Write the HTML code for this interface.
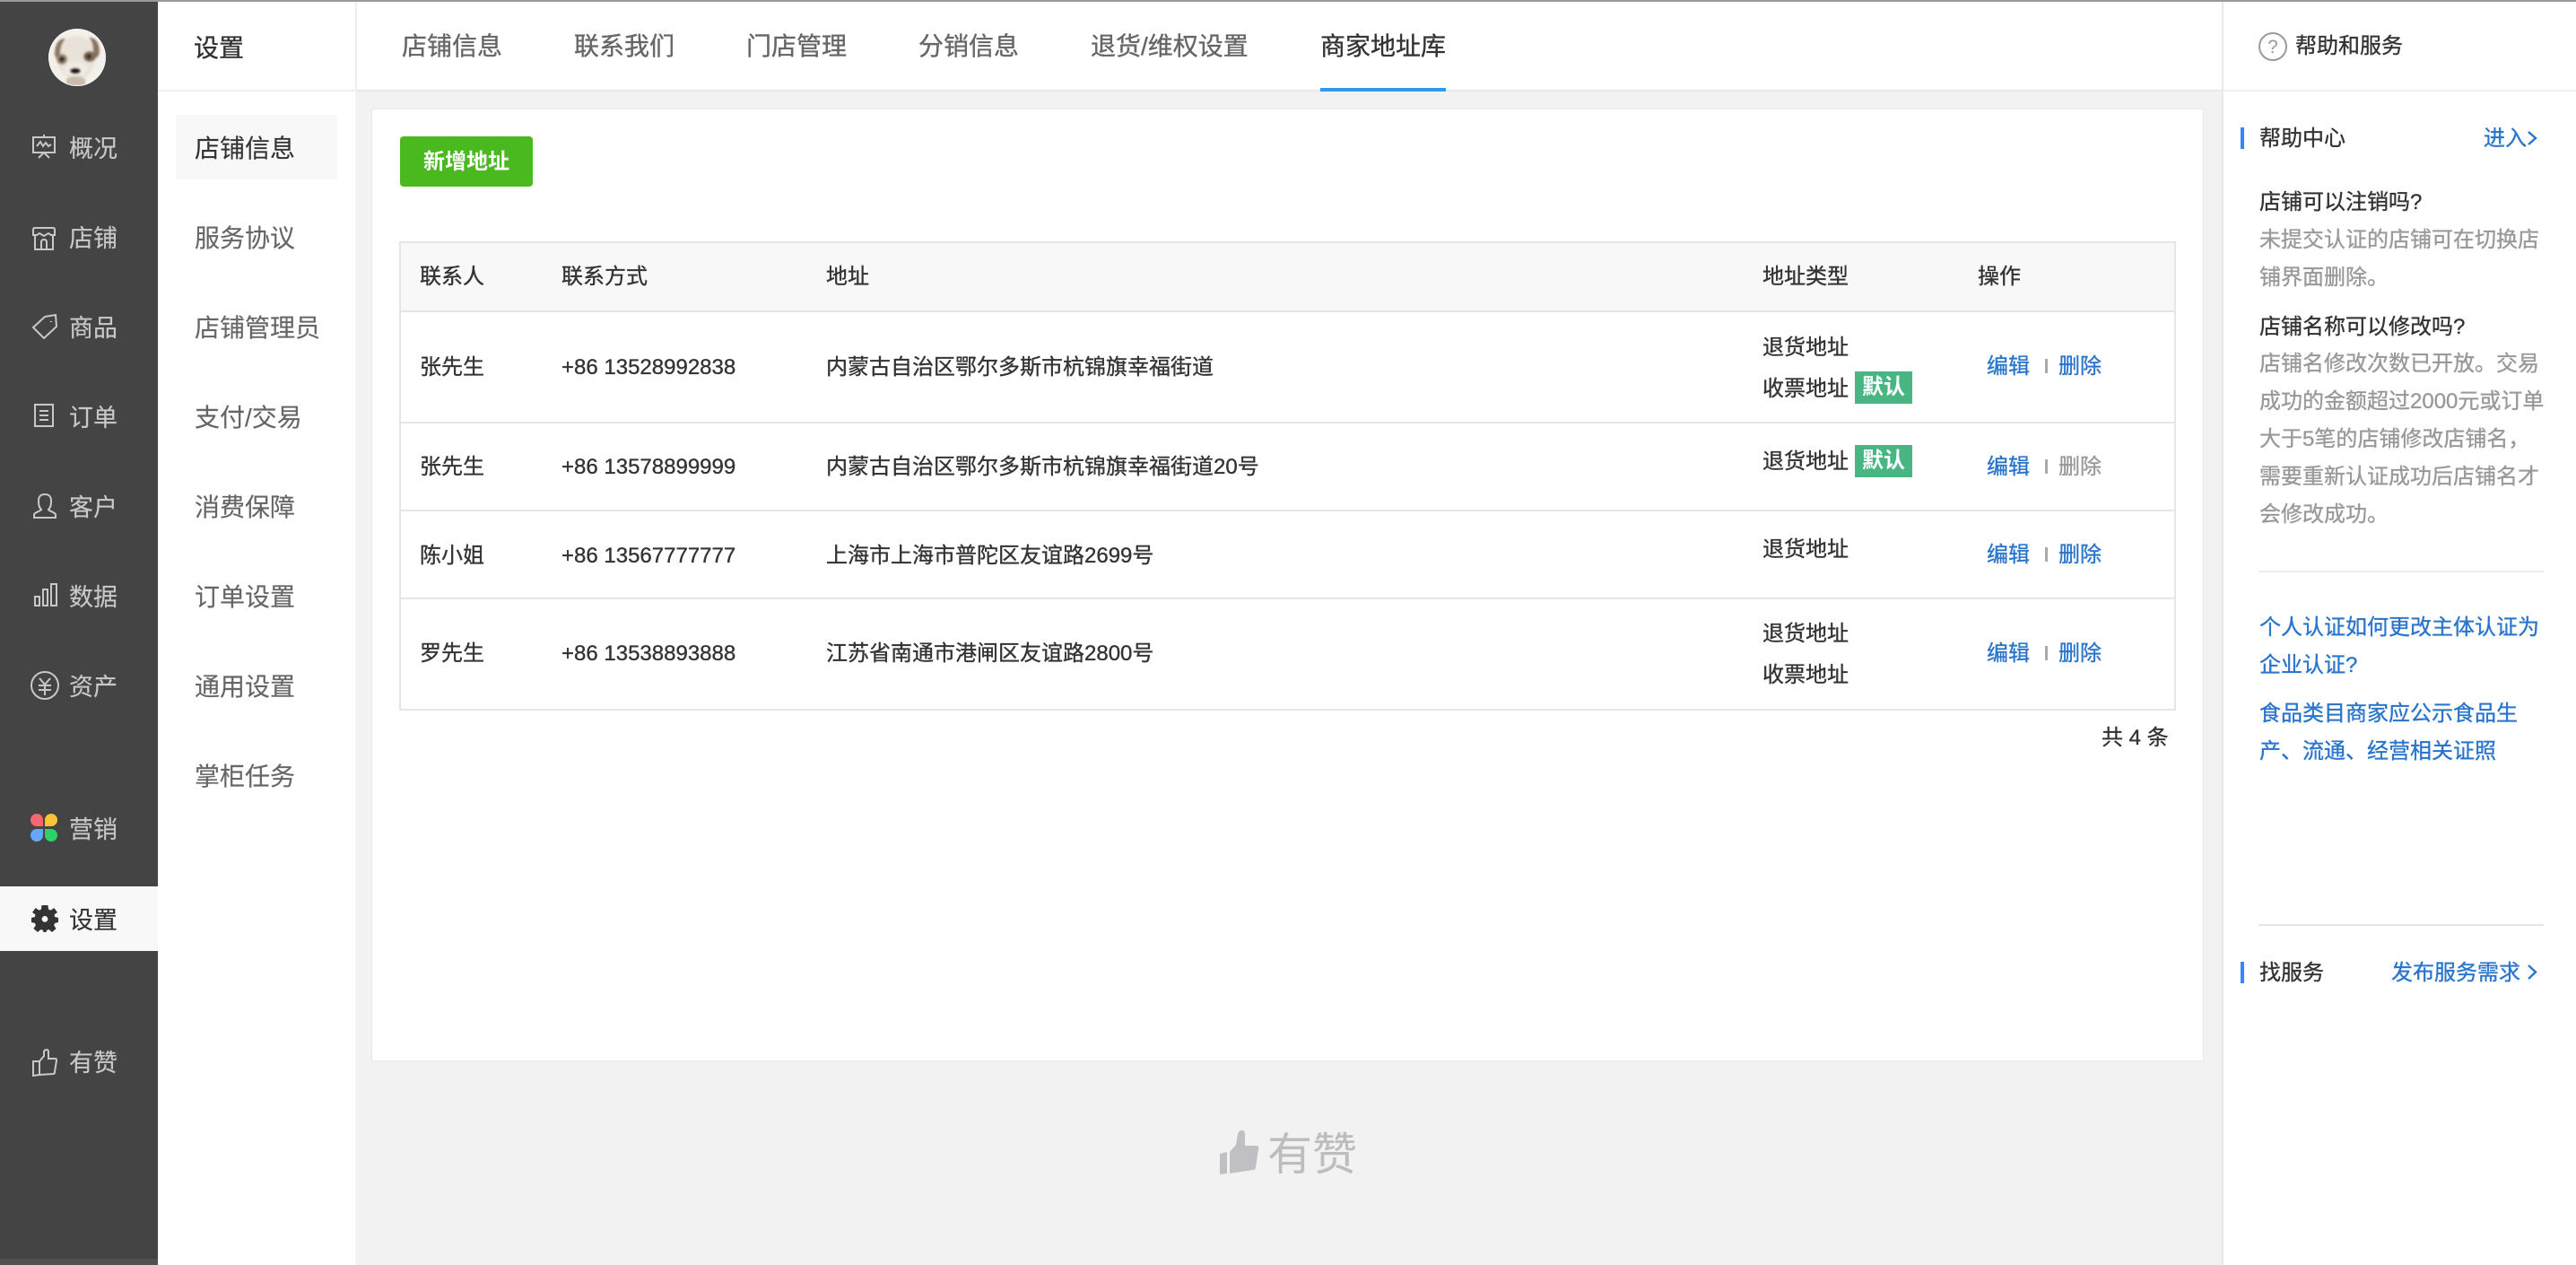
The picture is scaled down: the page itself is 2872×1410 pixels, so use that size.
<!DOCTYPE html>
<html lang="zh-CN"><head><meta charset="utf-8"><title>商家地址库</title>
<style>
html,body{margin:0;padding:0;width:2872px;height:1410px;overflow:hidden;background:#f2f2f2}
body{position:relative;font-family:"Liberation Sans","Noto Sans CJK SC",sans-serif;font-size:24px;color:#333}
div,span,svg{position:absolute}
.t{white-space:nowrap;line-height:40px;height:40px;transform:translateY(2px);-webkit-text-stroke:.35px currentColor}
.s{font-size:27px;color:#c8c8c8;left:77px;-webkit-text-stroke:.15px currentColor}
.n{font-size:28px;color:#666;left:217px;-webkit-text-stroke:.15px currentColor}
.tb{font-size:28px;color:#666;top:30px}
.l{color:#2a75cc}
.g{color:#999}
.bd{background:#e5e5e5}
.sep{left:2280px;width:3px;height:16px;background:#aaa}
.tag{background:#48b583;color:#fff;width:64px;height:36px;line-height:36px;text-align:center;left:2068px;font-size:24px;font-weight:700}
svg.i{fill:none;stroke:#c8c8c8;stroke-width:2}
</style></head><body>
<div style="left:0;top:0;width:2872px;height:2px;background:#999;z-index:5"></div>

<!-- primary sidebar -->
<div style="left:0;top:2px;width:176px;height:1401px;background:#444"></div>
<div style="left:0;top:1403px;width:176px;height:7px;background:#505050"></div>
<div style="left:0;top:988px;width:176px;height:72px;background:#f8f8f8"></div>

<svg style="left:54px;top:32px" width="64" height="64" viewBox="0 0 64 64">
<defs><clipPath id="c"><circle cx="32" cy="32" r="31"/></clipPath><filter id="bl"><feGaussianBlur stdDeviation="1"/></filter></defs>
<circle cx="32" cy="32" r="32" fill="#fbfaf8"/>
<g clip-path="url(#c)"><g filter="url(#bl)">
<rect width="64" height="64" fill="#f3efe9"/>
<ellipse cx="31" cy="32" rx="22" ry="24" fill="#e9e2d9"/>
<path d="M7 30C6 19 11 10 19 11 14 17 13 24 13 30L10 36Z" fill="#8f7a62"/>
<path d="M57 28C58 17 53 9 45 10 50 15 50 22 50 27L54 33Z" fill="#8a7660"/>
<ellipse cx="15" cy="34" rx="6" ry="6" fill="#98856f"/>
<ellipse cx="46" cy="31" rx="7" ry="6" fill="#7f6e5a"/>
<circle cx="15" cy="34" r="3" fill="#332921"/>
<circle cx="45" cy="31" r="3" fill="#40342a"/>
<ellipse cx="30" cy="45" rx="13" ry="8" fill="#f0ebe4"/>
<ellipse cx="30" cy="47" rx="6" ry="3.4" fill="#241d19"/>
<path d="M20 56Q30 50 41 56L41 64 20 64Z" fill="#c9bcac"/>
<path d="M0 46Q6 58 16 64L0 64Z" fill="#b4aa9d"/>
<path d="M64 46Q58 58 46 64L64 64Z" fill="#bfb5a8"/>
</g></g></svg>

<!-- 概况 -->
<svg class="i" style="left:36px;top:150px" width="26" height="27" viewBox="0 0 26 27"><path d="M1 3H25V20H1ZM13 0V3M5 13L9 8 12 13 15 9 18 13 21 11M7 26L13 20 19 26"/></svg>
<!-- 店铺 -->
<svg class="i" style="left:36px;top:253px" width="26" height="26" viewBox="0 0 26 26"><path d="M3 1H23Q25 1 25 3V9L21 9 18 7 13 10 8 7 5 9 1 9V3Q1 1 3 1ZM3 9V25H23V9M10 25V17Q10 14 13 14T16 17V25"/></svg>
<!-- 商品 -->
<svg class="i" style="left:36px;top:350px" width="28" height="28" viewBox="0 0 28 28"><path d="M14 3L26 1 27 14 13 27 1 15ZM21 8L21 9"/></svg>
<!-- 订单 -->
<svg class="i" style="left:38px;top:450px" width="22" height="26" viewBox="0 0 22 26"><path d="M1 1H21V25H1ZM6 8H16M6 13H16M6 18H16"/></svg>
<!-- 客户 -->
<svg class="i" style="left:37px;top:550px" width="26" height="28" viewBox="0 0 26 28"><path d="M1 27V24C1 21 8 20 9 18 6 15 6 11 6 8 6 3 9 1 13 1S20 3 20 8C20 11 20 15 17 18 18 20 25 21 25 24V27Z"/></svg>
<!-- 数据 -->
<svg class="i" style="left:38px;top:650px" width="26" height="26" viewBox="0 0 26 26"><path d="M1 15H6V25H1ZM10 7H15V25H10ZM19 1H25V25H19Z"/></svg>
<!-- 资产 -->
<svg class="i" style="left:34px;top:748px" width="32" height="32" viewBox="0 0 32 32"><circle cx="16" cy="16" r="15"/><path d="M10 8L16 15 22 8M9 16H23M9 21H23M16 15V27"/></svg>
<!-- 营销 -->
<svg style="left:34px;top:907px" width="30" height="31" viewBox="0 0 30 31">
<path d="M14 14H7A7 7 0 1 1 14 7Z" fill="#f5686f"/><path d="M16 14H23A7 7 0 1 0 16 7Z" fill="#fdc533"/>
<path d="M14 17H7A7 7 0 1 0 14 24Z" fill="#66a6fb"/><path d="M16 17H23A7 7 0 1 1 16 24Z" fill="#2cd168"/></svg>
<!-- 设置 gear -->
<svg style="left:35px;top:1009px" width="30" height="30" viewBox="0 0 30 30"><path fill="#333" fill-rule="evenodd" d="M11.5 0H18.5L19 4.5 21.5 5.6 25.3 3 29 8 25.6 10.5 26 13 30 14V19L26 20 25.2 22.5 27.6 26 23 30 19.5 27 17 28 16.5 30H13.5L13 28 10.5 27 7 30 2.4 26 4.8 22.5 4 20 0 19V14L4 13 4.4 10.5 1 8 4.7 3 8.5 5.6 11 4.5ZM15 12A3.4 3.4 0 1 0 15 18.8 3.4 3.4 0 0 0 15 12Z"/></svg>
<!-- 有赞 thumb -->
<svg class="i" style="left:36px;top:1169px" width="28" height="31" viewBox="0 0 28 31"><path d="M1 14H8V29L1 30ZM8 14L13 8V3Q14 1 16 1 18 1 18 4V11H26Q27 11 27 13L25 26Q25 28 23 28L8 29"/></svg>

<div class="t s" style="top:144px">概况</div>
<div class="t s" style="top:244px">店铺</div>
<div class="t s" style="top:344px">商品</div>
<div class="t s" style="top:444px">订单</div>
<div class="t s" style="top:544px">客户</div>
<div class="t s" style="top:644px">数据</div>
<div class="t s" style="top:744px">资产</div>
<div class="t s" style="top:903px">营销</div>
<div class="t s" style="top:1004px;color:#333">设置</div>
<div class="t s" style="top:1163px">有赞</div>

<!-- secondary nav -->
<div style="left:176px;top:2px;width:220px;height:1408px;background:#fff"></div>
<div style="left:176px;top:100px;width:220px;height:2px;background:#f0f0f0"></div>
<div style="left:396px;top:2px;width:2px;height:98px;background:#eee"></div>
<div style="left:196px;top:128px;width:180px;height:72px;background:#f8f8f8;border-radius:2px"></div>
<div class="t" style="left:216px;top:32px;font-size:28px;color:#333">设置</div>
<div class="t n" style="top:144px;color:#333">店铺信息</div>
<div class="t n" style="top:244px">服务协议</div>
<div class="t n" style="top:344px">店铺管理员</div>
<div class="t n" style="top:444px">支付/交易</div>
<div class="t n" style="top:544px">消费保障</div>
<div class="t n" style="top:644px">订单设置</div>
<div class="t n" style="top:744px">通用设置</div>
<div class="t n" style="top:844px">掌柜任务</div>

<!-- tabs -->
<div style="left:398px;top:2px;width:2079px;height:98px;background:#fff"></div>
<div style="left:398px;top:100px;width:2079px;height:2px;background:#e8e8e8"></div>
<div class="t tb" style="left:448px">店铺信息</div>
<div class="t tb" style="left:640px">联系我们</div>
<div class="t tb" style="left:832px">门店管理</div>
<div class="t tb" style="left:1024px">分销信息</div>
<div class="t tb" style="left:1216px">退货/维权设置</div>
<div class="t tb" style="left:1472px;color:#333">商家地址库</div>
<div style="left:1472px;top:98px;width:140px;height:4px;background:#2d9cf0"></div>

<!-- card -->
<div style="left:415px;top:122px;width:2041px;height:1060px;background:#fff;box-shadow:0 0 0 1px #e8e8e8"></div>
<div style="left:446px;top:152px;width:148px;height:56px;background:#4ab81f;border-radius:4px"></div>
<div class="t" style="left:446px;top:159px;width:148px;text-align:center;color:#fff;font-weight:700;-webkit-text-stroke:0">新增地址</div>

<!-- table -->
<div style="left:446px;top:269px;width:1979px;height:78px;background:#f8f8f8"></div>
<div class="bd" style="left:446px;top:269px;width:1979px;height:2px"></div>
<div class="bd" style="left:446px;top:346px;width:1979px;height:2px"></div>
<div class="bd" style="left:446px;top:470px;width:1979px;height:2px"></div>
<div class="bd" style="left:446px;top:568px;width:1979px;height:2px"></div>
<div class="bd" style="left:446px;top:666px;width:1979px;height:2px"></div>
<div class="bd" style="left:446px;top:790px;width:1979px;height:2px"></div>
<div class="bd" style="left:445px;top:269px;width:2px;height:523px"></div>
<div class="bd" style="left:2424px;top:269px;width:2px;height:523px"></div>

<div class="t" style="left:468px;top:287px">联系人</div>
<div class="t" style="left:626px;top:287px">联系方式</div>
<div class="t" style="left:921px;top:287px">地址</div>
<div class="t" style="left:1965px;top:287px">地址类型</div>
<div class="t" style="left:2205px;top:287px">操作</div>

<div class="t" style="left:468px;top:388px">张先生</div>
<div class="t" style="left:626px;top:388px">+86 13528992838</div>
<div class="t" style="left:921px;top:388px">内蒙古自治区鄂尔多斯市杭锦旗幸福街道</div>
<div class="t" style="left:1965px;top:366px">退货地址</div>
<div class="t" style="left:1965px;top:412px">收票地址</div>
<div class="tag" style="top:414px">默认</div>
<div class="t l" style="left:2215px;top:387px">编辑</div>
<div class="sep" style="top:400px"></div>
<div class="t l" style="left:2295px;top:387px">删除</div>

<div class="t" style="left:468px;top:499px">张先生</div>
<div class="t" style="left:626px;top:499px">+86 13578899999</div>
<div class="t" style="left:921px;top:499px">内蒙古自治区鄂尔多斯市杭锦旗幸福街道20号</div>
<div class="t" style="left:1965px;top:493px">退货地址</div>
<div class="tag" style="top:496px">默认</div>
<div class="t l" style="left:2215px;top:499px">编辑</div>
<div class="sep" style="top:512px"></div>
<div class="t g" style="left:2295px;top:499px">删除</div>

<div class="t" style="left:468px;top:598px">陈小姐</div>
<div class="t" style="left:626px;top:598px">+86 13567777777</div>
<div class="t" style="left:921px;top:598px">上海市上海市普陀区友谊路2699号</div>
<div class="t" style="left:1965px;top:591px">退货地址</div>
<div class="t l" style="left:2215px;top:597px">编辑</div>
<div class="sep" style="top:610px"></div>
<div class="t l" style="left:2295px;top:597px">删除</div>

<div class="t" style="left:468px;top:707px">罗先生</div>
<div class="t" style="left:626px;top:707px">+86 13538893888</div>
<div class="t" style="left:921px;top:707px">江苏省南通市港闸区友谊路2800号</div>
<div class="t" style="left:1965px;top:685px">退货地址</div>
<div class="t" style="left:1965px;top:731px">收票地址</div>
<div class="t l" style="left:2215px;top:707px">编辑</div>
<div class="sep" style="top:720px"></div>
<div class="t l" style="left:2295px;top:707px">删除</div>

<div class="t" style="left:2343px;top:801px">共 4 条</div>

<!-- footer logo -->
<svg style="left:1360px;top:1260px" width="44" height="50" viewBox="0 0 44 50"><path fill="#c0c0c4" d="M0 26L8 24V48L0 49ZM11 24L18 16 20 4Q21 0 25 0 28 0 28 4V17H41Q44 17 43 21L40 41Q40 44 37 44L11 48Z"/></svg>
<div class="t" style="left:1413px;top:1260px;font-size:50px;height:50px;line-height:50px;color:#bdbdbd;-webkit-text-stroke:0">有赞</div>

<!-- right panel -->
<div style="left:2477px;top:2px;width:395px;height:1408px;background:#fff"></div>
<div style="left:2477px;top:2px;width:2px;height:1408px;background:#e8e8e8"></div>
<div style="left:2479px;top:100px;width:393px;height:2px;background:#f0f0f0"></div>
<svg style="left:2518px;top:36px" width="32" height="32" viewBox="0 0 32 32"><circle cx="16" cy="16" r="15" fill="none" stroke="#999" stroke-width="2"/><text x="16" y="23" text-anchor="middle" font-size="21" fill="#999" font-family="Liberation Sans">?</text></svg>
<div class="t" style="left:2559px;top:30px">帮助和服务</div>

<div style="left:2498px;top:142px;width:4px;height:24px;background:#38f"></div>
<div class="t" style="left:2519px;top:133px">帮助中心</div>
<div class="t l" style="left:2769px;top:133px">进入</div>
<svg style="left:2817px;top:146px" width="12" height="16" viewBox="0 0 12 16"><path d="M2 1L10 8 2 15" fill="none" stroke="#2a75cc" stroke-width="2.4"/></svg>

<div class="t" style="left:2519px;top:204px">店铺可以注销吗?</div>
<div class="t g" style="left:2519px;top:246px">未提交认证的店铺可在切换店</div>
<div class="t g" style="left:2519px;top:288px">铺界面删除。</div>
<div class="t" style="left:2519px;top:343px">店铺名称可以修改吗?</div>
<div class="t g" style="left:2519px;top:384px">店铺名修改次数已开放。交易</div>
<div class="t g" style="left:2519px;top:426px">成功的金额超过2000元或订单</div>
<div class="t g" style="left:2519px;top:468px">大于5笔的店铺修改店铺名，</div>
<div class="t g" style="left:2519px;top:510px">需要重新认证成功后店铺名才</div>
<div class="t g" style="left:2519px;top:552px">会修改成功。</div>

<div style="left:2518px;top:636px;width:318px;height:2px;background:#eee"></div>
<div class="t l" style="left:2519px;top:678px">个人认证如何更改主体认证为</div>
<div class="t l" style="left:2519px;top:720px">企业认证?</div>
<div class="t l" style="left:2519px;top:774px">食品类目商家应公示食品生</div>
<div class="t l" style="left:2519px;top:816px">产、流通、经营相关证照</div>

<div style="left:2518px;top:1030px;width:318px;height:2px;background:#e5e5e5"></div>
<div style="left:2498px;top:1072px;width:4px;height:24px;background:#38f"></div>
<div class="t" style="left:2519px;top:1063px">找服务</div>
<div class="t l" style="left:2666px;top:1063px">发布服务需求</div>
<svg style="left:2817px;top:1075px" width="12" height="17" viewBox="0 0 12 17"><path d="M2 1L10 8.5 2 16" fill="none" stroke="#2a75cc" stroke-width="2.4"/></svg>
</body></html>
